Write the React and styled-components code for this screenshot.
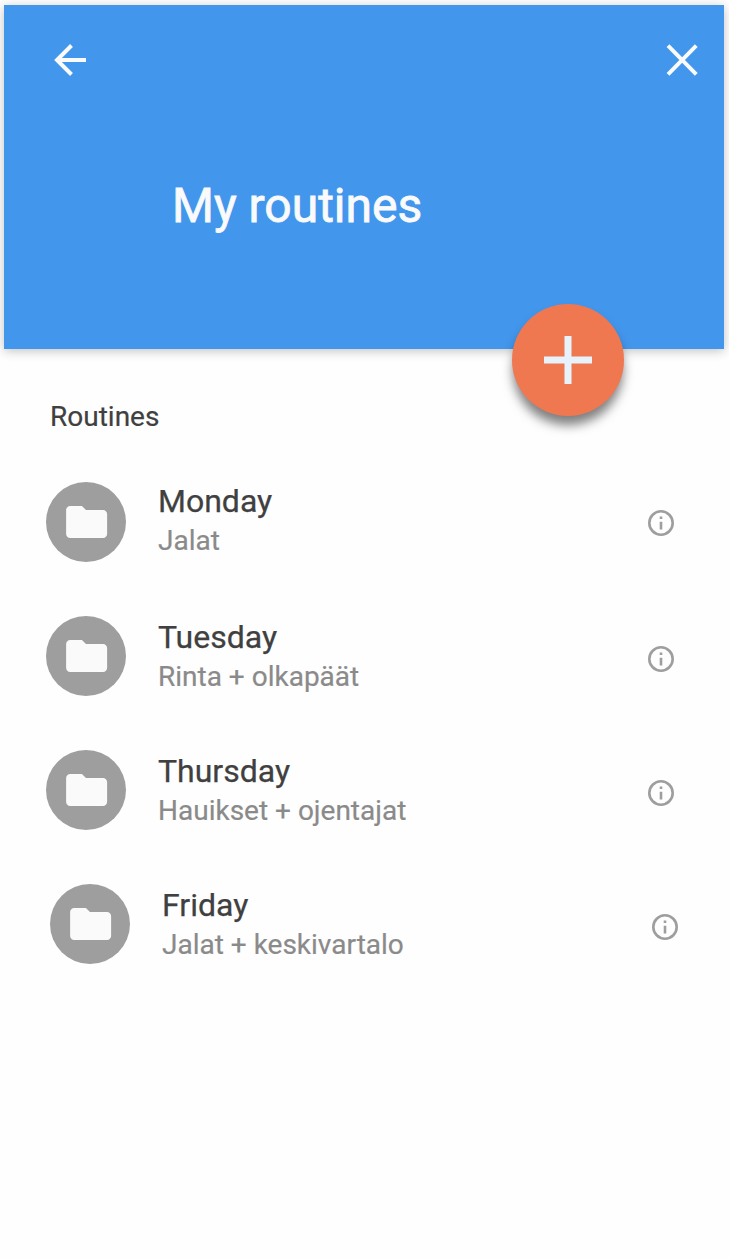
import React from "react";
import styled, { createGlobalStyle } from "styled-components";

const GlobalStyle = createGlobalStyle`
  * { box-sizing: border-box; }
  body { margin: 0; background: #fefefe; font-family: Roboto, "Liberation Sans", sans-serif; }
`;

const Screen = styled.main`
  width: 729px;
  height: 1259px;
  padding: 5px 5px 0 4px;
  overflow: hidden;
`;

const Header = styled.header`
  position: relative;
  height: 344px;
  padding: 35px 22px 0 46px;
  background: #4296ec;
  box-shadow: 0 2px 10px rgba(0, 0, 0, 0.24);
`;

const Toolbar = styled.div`
  display: flex;
  justify-content: space-between;
`;

const IconButton = styled.button`
  display: flex;
  width: 40px;
  height: 40px;
  padding: 0;
  border: 0;
  background: none;
  color: #fafafa;
`;

const Title = styled.h1`
  margin: 98px 0 0 122px;
  font-size: 48px;
  line-height: 56px;
  font-weight: 400;
  color: #fafafa;
  -webkit-text-stroke: 0.8px #fafafa;
`;

const AddButton = styled.button`
  position: absolute;
  right: 100px;
  bottom: -67px;
  display: flex;
  align-items: center;
  justify-content: center;
  width: 112px;
  height: 112px;
  padding: 0;
  border: 0;
  border-radius: 50%;
  background: #ef7850;
  box-shadow: 0 10px 11px -1px rgba(0, 0, 0, 0.5);
`;

const SectionTitle = styled.h2`
  margin: 52px 0 0 46px;
  font-size: 28px;
  line-height: 32px;
  font-weight: 400;
  color: #404040;
  -webkit-text-stroke: 0.2px #404040;
`;

const List = styled.ul`
  display: flex;
  flex-direction: column;
  margin: 49px 0 0;
  padding: 0;
  list-style: none;
`;

const Row = styled.li`
  display: flex;
  height: 134px;
  padding: 0 49px 0 42px;
  transform: translateX(${(p) => p.$shift || 0}px);
`;

const Avatar = styled.span`
  display: flex;
  align-items: center;
  justify-content: center;
  width: 80px;
  height: 80px;
  border-radius: 50%;
  background: #9e9e9e;
`;

const Labels = styled.div`
  flex: 1;
  margin-left: 32px;
  padding-top: ${(p) => p.$top}px;
`;

const Name = styled.div`
  font-size: 32px;
  line-height: 38px;
  color: #404040;
  -webkit-text-stroke: 0.25px #404040;
`;

const Detail = styled.div`
  font-size: 28px;
  line-height: 42px;
  color: #8a8a8a;
  -webkit-text-stroke: 0.2px #8a8a8a;
`;

const Info = styled.span`
  display: flex;
  height: 28px;
  margin-top: ${(p) => p.$top}px;
`;

const routines = [
  { day: "Monday", detail: "Jalat", top: 0 },
  { day: "Tuesday", detail: "Rinta + olkapäät", top: 2 },
  { day: "Thursday", detail: "Hauikset + ojentajat", top: 2 },
  { day: "Friday", detail: "Jalat + keskivartalo", top: 2, shift: 4 },
];

const FolderIcon = () => (
  <svg width="50" height="48" viewBox="-0.5 0 24.4 24" preserveAspectRatio="none" fill="#fafafa">
    <path d="M9.7 4H4c-1.1 0-2 .9-2 2v12c0 1.1.9 2 2 2h16c1.1 0 2-.9 2-2V8c0-1.1-.9-2-2-2h-8.300l-2-2z" />
  </svg>
);

const InfoIcon = () => (
  <svg width="28" height="28" viewBox="0 0 28 28">
    <circle cx="14" cy="14" r="11.7" fill="none" stroke="#9e9e9e" strokeWidth="2.6" />
    <path d="M12.7 7.5h2.6v2.6h-2.6zM12.7 12.7h2.6v7.8h-2.6z" fill="#9e9e9e" />
  </svg>
);

export default function App() {
  return (
    <>
      <GlobalStyle />
      <Screen>
        <Header>
          <Toolbar>
            <IconButton aria-label="Back">
              <svg width="40" height="40" viewBox="0 0 40 40" fill="none" stroke="currentColor" strokeWidth="4">
                <path d="M36 20H7M21.5 5.5L7 20l14.500 14.500" />
              </svg>
            </IconButton>
            <IconButton aria-label="Close">
              <svg width="40" height="40" viewBox="0 0 40 40" fill="none" stroke="currentColor" strokeWidth="4">
                <path d="M6 5.700l28.300 28.600M34.300 5.700L6 34.300" />
              </svg>
            </IconButton>
          </Toolbar>
          <Title>My routines</Title>
          <AddButton aria-label="Add routine">
            <svg width="48" height="48" viewBox="0 0 48 48">
              <path d="M20.500 0h7v20.500H48v7H27.500V48h-7V27.500H0v-7h20.500z" fill="#e8f2fc" />
            </svg>
          </AddButton>
        </Header>
        <SectionTitle>Routines</SectionTitle>
        <List>
          {routines.map((r) => (
            <Row key={r.day} $shift={r.shift}>
              <Avatar><FolderIcon /></Avatar>
              <Labels $top={r.top}>
                <Name>{r.day}</Name>
                <Detail>{r.detail}</Detail>
              </Labels>
              <Info $top={27 + r.top}><InfoIcon /></Info>
            </Row>
          ))}
        </List>
      </Screen>
    </>
  );
}
